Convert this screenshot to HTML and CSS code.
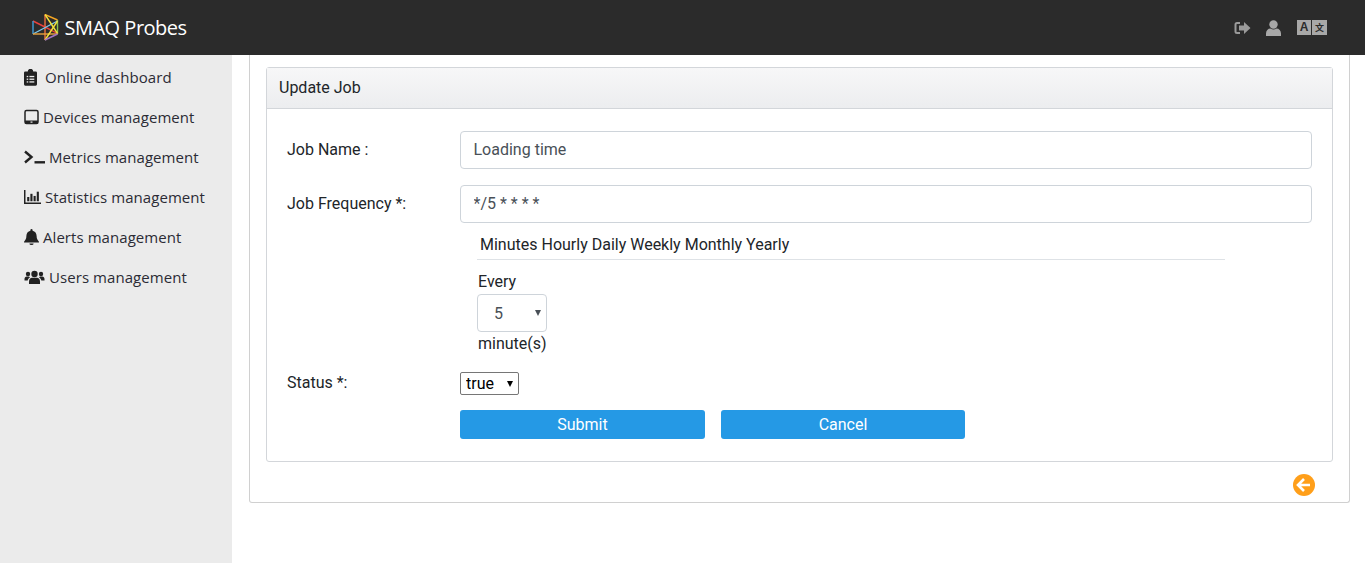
FILE: index.html
```html
<!DOCTYPE html>
<html lang="en">
<head>
  <meta charset="UTF-8">
  <title>SMAQ Probes</title>
  <link rel="stylesheet" href="styles.css">
</head>
<body>

  <header class="topbar">
    <div class="brand">
      <svg class="logo" width="28" height="28" viewBox="0 0 28 28" fill="none" stroke-width="1.4">
        <path d="M13 .5 L25.500 6" stroke="#f5a623"/>
        <path d="M13 .5 L13 26" stroke="#f0703c"/>
        <path d="M25.500 6 L25.500 20" stroke="#8bc34a"/>
        <path d="M1 7 L13 13 L25.500 19.500" stroke="#e8413c"/>
        <path d="M1 20 L25.500 7" stroke="#7cc8ec"/>
        <path d="M1 7 L1 20" stroke="#3f9fdc"/>
        <path d="M1 20 L25.500 20" stroke="#e8a33c"/>
        <path d="M13 .5 L25.500 19.500" stroke="#f2e23c"/>
        <path d="M25.500 7 L13 26" stroke="#f2e23c"/>
        <path d="M13 26 L25.500 20" stroke="#a274c4"/>
      </svg>
      <span class="brand-name">SMAQ Probes</span>
    </div>
    <div class="top-icons">
      <svg width="17" height="14" viewBox="0 0 17 14" fill="#9a9a9a"><path d="M6 1H3a2.500 2.500 0 0 0-2.500 2.500v7A2.500 2.500 0 0 0 3 13h3v-2H3a.5.5 0 0 1-.5-.5v-7A.5.5 0 0 1 3 3h3z"/><path d="M10 1l6.500 6-6.500 6V9.500H5v-5h5z"/></svg>
      <svg width="15" height="16" viewBox="0 0 15 16" fill="#a8a8a8"><circle cx="7.500" cy="4.500" r="4.200"/><path d="M0 16v-2.500C0 10.500 2 8.500 4.500 8.500c1 .6 2 1 3 1s2-.4 3-1c2.500 0 4.500 2 4.500 5V16z"/></svg>
      <div class="lang">
        <span class="lang-a">A</span>
        <span class="lang-b">文</span>
      </div>
    </div>
  </header>

  <div class="layout">
    <nav class="sidebar">
      <a class="nav-item">
        <svg class="ic" width="13" height="17" viewBox="0 0 12 15" fill="#222"><path d="M1.200 2H3.500a2.500 2.500 0 0 1 5 0h2.300A1.200 1.200 0 0 1 12 3.200v10.600a1.200 1.200 0 0 1-1.200 1.200H1.200A1.200 1.200 0 0 1 0 13.800V3.200A1.200 1.200 0 0 1 1.200 2z"/><g fill="#ebebeb"><rect x="2.500" y="6" width="1.400" height="1.200"/><rect x="5" y="6" width="4.500" height="1.200"/><rect x="2.500" y="8.500" width="1.400" height="1.200"/><rect x="5" y="8.500" width="4.500" height="1.200"/><rect x="2.500" y="11" width="1.400" height="1.200"/><rect x="5" y="11" width="4.500" height="1.200"/></g></svg>
        <span class="label-wide">Online dashboard</span>
      </a>
      <a class="nav-item">
        <svg class="ic" width="15" height="16" viewBox="0 0 15 15" fill="none"><rect x="1" y="1" width="13" height="13" rx="1.500" stroke="#222" stroke-width="1.500"/><rect x="1" y="11" width="13" height="3" fill="#222"/><rect x="6.500" y="12" width="2" height="1.200" fill="#ebebeb"/></svg>
        <span>Devices management</span>
      </a>
      <a class="nav-item">
        <svg class="ic" width="21" height="14" viewBox="0 0 21 13" fill="none" stroke="#222" stroke-width="2.400"><path d="M1 1l6.500 5.500L1 12"/><path d="M10.500 11.800H21"/></svg>
        <span>Metrics management</span>
      </a>
      <a class="nav-item">
        <svg class="ic" width="17" height="14" viewBox="0 0 16 13" fill="#222"><path d="M0 0h1.400v11.600H16V13H0z"/><rect x="3" y="6.500" width="2" height="4"/><rect x="6" y="3.500" width="2" height="7"/><rect x="9" y="5.500" width="2" height="5"/><rect x="12" y="1.500" width="2" height="9"/></svg>
        <span>Statistics management</span>
      </a>
      <a class="nav-item">
        <svg class="ic" width="15" height="16" viewBox="0 0 14 15" fill="#222"><path d="M7 0a1 1 0 0 1 1 1v.6c2.400.4 3.800 2.400 3.800 5 0 2.800 1 3.800 2.200 5.400v.6H0V12c1.200-1.600 2.200-2.600 2.200-5.400 0-2.600 1.400-4.600 3.800-5V1a1 1 0 0 1 1-1z"/><path d="M5 13.500h4a2 1.500 0 0 1-4 0z"/></svg>
        <span>Alerts management</span>
      </a>
      <a class="nav-item">
        <svg class="ic" width="21" height="14" viewBox="0 0 20 14" fill="#222"><circle cx="10" cy="4" r="3.200"/><path d="M4.500 14v-2.500C4.500 9 6 7.800 7.500 7.800h5c1.500 0 3 1.200 3 3.700V14z"/><circle cx="3.500" cy="4" r="2.200"/><circle cx="16.500" cy="4" r="2.200"/><path d="M0 10.500V9c0-1.500 1-2.500 2.200-2.500h2.300c.3.400.6.800 1 1-1.300.7-2 1.600-2.300 3zM20 10.500V9c0-1.500-1-2.500-2.200-2.500h-2.300c-.3.400-.6.800-1 1 1.300.7 2 1.600 2.300 3z"/></svg>
        <span>Users management</span>
      </a>
    </nav>

    <main class="content">
      <div class="outer-panel">
        <div class="card">
          <div class="card-head">Update Job</div>
          <form class="card-body">
            <div class="row">
              <label class="row-label">Job Name :</label>
              <input class="text-input" type="text" value="Loading time">
            </div>
            <div class="row row-freq">
              <label class="row-label">Job Frequency *:</label>
              <div class="row-field">
                <input class="text-input" type="text" value="*/5 * * * *">
                <div class="cron">
                  <div class="cron-tabs">Minutes Hourly Daily Weekly Monthly Yearly</div>
                  <div class="cron-pane">
                    <div class="cron-text">Every</div>
                    <div class="select-wrap cron-wrap">
                      <select class="cron-select"><option>5</option></select>
                    </div>
                    <div class="cron-text">minute(s)</div>
                  </div>
                </div>
              </div>
            </div>
            <div class="row row-status">
              <label class="row-label">Status *:</label>
              <div class="select-wrap status-wrap">
                <select class="status-select"><option>true</option></select>
              </div>
            </div>
            <div class="actions">
              <button type="button" class="btn btn-submit">Submit</button>
              <button type="button" class="btn">Cancel</button>
            </div>
          </form>
        </div>
        <div class="back-row">
          <svg width="22" height="22" viewBox="0 0 22 22"><circle cx="11" cy="11" r="11" fill="#ff9f1a"/><path d="M11 5l-6 6 6 6M5.500 11H17" fill="none" stroke="#fff" stroke-width="2.600"/></svg>
        </div>
      </div>
    </main>
  </div>

</body>
</html>
```

FILE: styles.css
```css
* {
  box-sizing: border-box;
}

html, body {
  height: 100%;
}

body {
  margin: 0;
  font-family: Roboto, Arial, sans-serif;
  font-size: 16px;
  color: #212529;
  background-color: #fff;
  display: flex;
  flex-direction: column;
  overflow: hidden;
}

.topbar {
  height: 55px;
  flex: none;
  background-color: #2b2b2b;
  display: flex;
  align-items: center;
  justify-content: space-between;
  padding: 0 38px 0 32px;
}

.brand {
  display: flex;
  align-items: center;
  gap: 5px;
  color: #fff;
  font-family: "Open Sans", sans-serif;
  font-size: 20px;
}

.brand-name {
  letter-spacing: -0.5px;
  margin-left: -0.5px;
}

.top-icons {
  display: flex;
  align-items: center;
}

.top-icons svg:first-child {
  margin-right: 15px;
}

.lang {
  display: flex;
  margin-left: 16px;
  height: 15px;
  width: 30px;
  font-size: 12px;
  line-height: 15px;
  text-align: center;
  font-weight: 700;
  color: #2b2b2b;
}

.lang-a,
.lang-b {
  width: 15px;
  background-color: #a8a8a8;
  font-family: "Liberation Sans", sans-serif;
}

.lang-a {
  border-right: 1px solid #2b2b2b;
}

.lang-b {
  font-family: "Noto Sans CJK SC", sans-serif;
  font-size: 9px;
}

.layout {
  flex: 1;
  display: flex;
  min-height: 0;
}

.sidebar {
  width: 232px;
  flex: none;
  background-color: #ebebeb;
  padding-top: 2px;
  font-family: "Open Sans", sans-serif;
  font-size: 15px;
  letter-spacing: 0.06px;
  color: #2b2b35;
}

.nav-item {
  display: flex;
  align-items: center;
  height: 40px;
  padding-left: 24px;
  gap: 4px;
}

.label-wide {
  margin-left: 4px;
}

.content {
  flex: 1;
  padding: 0 15px 0 17px;
}

.outer-panel {
  border: 1px solid #d0d0d0;
  border-top: none;
  border-radius: 0 0 3px 3px;
  padding: 12px 16px 0;
  height: 448px;
}

.card {
  border: 1px solid #d3d6da;
  border-radius: 3px;
  height: 395px;
}

.card-head {
  height: 41px;
  padding: 0 12px 2px;
  display: flex;
  align-items: center;
  background: linear-gradient(#f7f7f8, #ecedef);
  border-bottom: 1px solid #d3d6da;
}

.card-body {
  padding: 22px 20px 0;
}

.row {
  display: flex;
  align-items: flex-start;
  margin-bottom: 16px;
}

.row-label {
  width: 173px;
  flex: none;
  padding-top: 9px;
}

.row-field {
  flex: 1;
}

.text-input {
  display: block;
  width: 100%;
  height: 38px;
  padding: 0 12.5px 2px;
  border: 1px solid #ced4da;
  border-radius: 4px;
  font-family: Roboto, Arial, sans-serif;
  font-size: 16px;
  color: #495057;
  background-color: #fff;
}

.row-freq {
  margin-bottom: 0;
}

.cron {
  width: 765px;
  padding-left: 17px;
}

.cron-tabs {
  padding: 12px 3px 0;
  height: 37px;
  border-bottom: 1px solid #dee2e6;
}

.cron-pane {
  padding-top: 10px;
  line-height: 23px;
}

.cron-text {
  padding-left: 1px;
}

.select-wrap {
  position: relative;
}

.select-wrap::after {
  content: "";
  position: absolute;
  top: 50%;
  margin-top: -3px;
  border-left: 3.5px solid transparent;
  border-right: 3.5px solid transparent;
  border-top: 6px solid #000;
  pointer-events: none;
}

.cron-wrap {
  width: 70px;
  margin-top: 1px;
}

.cron-wrap::after {
  right: 6px;
  border-top-color: #495057;
}

.cron-select {
  display: block;
  width: 70px;
  height: 38px;
  padding-left: 16px;
  border: 1px solid #ced4da;
  border-radius: 4px;
  background-color: #fff;
  font-family: Roboto, Arial, sans-serif;
  font-size: 16px;
  color: #495057;
  appearance: none;
}

.row-status {
  margin-top: 17px;
  margin-bottom: 0;
  align-items: center;
}

.row-status .row-label {
  padding-top: 0;
  margin-top: -2px;
}

.status-wrap {
  width: 59px;
}

.status-wrap::after {
  right: 6px;
}

.status-select {
  display: block;
  width: 59px;
  height: 23px;
  padding-left: 5px;
  border: 1px solid #767676;
  border-radius: 2px;
  background-color: #fff;
  font-family: Roboto, Arial, sans-serif;
  font-size: 16px;
  color: #000;
  appearance: none;
}

.actions {
  display: flex;
  gap: 16px;
  margin: 15px 0 0 173px;
}

.btn {
  width: 244px;
  height: 29px;
  border: none;
  border-radius: 3px;
  background-color: #2599e5;
  color: #fff;
  font-family: Roboto, Arial, sans-serif;
  font-size: 16px;
}

.btn-submit {
  width: 245px;
}

.back-row {
  display: flex;
  justify-content: flex-end;
  padding: 12px 18px 0 0;
}
```
